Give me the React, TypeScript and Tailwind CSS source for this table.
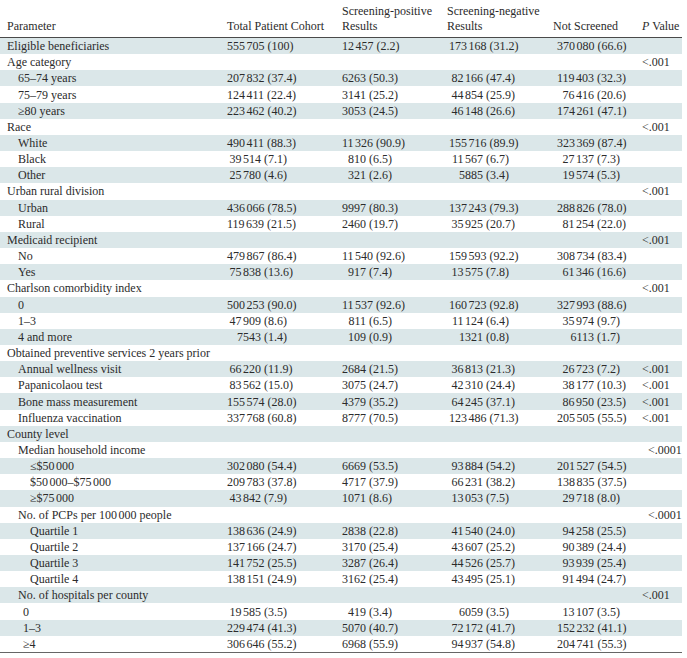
import type { ReactNode } from 'react';

type Row = {
  label: ReactNode;
  indent: 0 | 1 | 2 | 3;
  cells?: [string, string, string, string];
  p?: string;
};

// narrow gap used as the thousands separator
const G = () => <span className="ml-[1.5px]" />;

function Num({ n }: { n: string }) {
  if (n.length <= 4) return <>{n}</>;
  return (
    <>
      {n.slice(0, n.length - 3)}
      <G />
      {n.slice(-3)}
    </>
  );
}

const rows: Row[] = [
  { label: 'Eligible beneficiaries', indent: 0, cells: ['555705 (100)', '12457 (2.2)', '173168 (31.2)', '370080 (66.6)'] },
  { label: 'Age category', indent: 0, p: '<.001' },
  { label: '65–74 years', indent: 1, cells: ['207832 (37.4)', '6263 (50.3)', '82166 (47.4)', '119403 (32.3)'] },
  { label: '75–79 years', indent: 1, cells: ['124411 (22.4)', '3141 (25.2)', '44854 (25.9)', '76416 (20.6)'] },
  { label: '≥80 years', indent: 1, cells: ['223462 (40.2)', '3053 (24.5)', '46148 (26.6)', '174261 (47.1)'] },
  { label: 'Race', indent: 0, p: '<.001' },
  { label: 'White', indent: 1, cells: ['490411 (88.3)', '11326 (90.9)', '155716 (89.9)', '323369 (87.4)'] },
  { label: 'Black', indent: 1, cells: ['39514 (7.1)', '810 (6.5)', '11567 (6.7)', '27137 (7.3)'] },
  { label: 'Other', indent: 1, cells: ['25780 (4.6)', '321 (2.6)', '5885 (3.4)', '19574 (5.3)'] },
  { label: 'Urban rural division', indent: 0, p: '<.001' },
  { label: 'Urban', indent: 1, cells: ['436066 (78.5)', '9997 (80.3)', '137243 (79.3)', '288826 (78.0)'] },
  { label: 'Rural', indent: 1, cells: ['119639 (21.5)', '2460 (19.7)', '35925 (20.7)', '81254 (22.0)'] },
  { label: 'Medicaid recipient', indent: 0, p: '<.001' },
  { label: 'No', indent: 1, cells: ['479867 (86.4)', '11540 (92.6)', '159593 (92.2)', '308734 (83.4)'] },
  { label: 'Yes', indent: 1, cells: ['75838 (13.6)', '917 (7.4)', '13575 (7.8)', '61346 (16.6)'] },
  { label: 'Charlson comorbidity index', indent: 0, p: '<.001' },
  { label: '0', indent: 1, cells: ['500253 (90.0)', '11537 (92.6)', '160723 (92.8)', '327993 (88.6)'] },
  { label: '1–3', indent: 1, cells: ['47909 (8.6)', '811 (6.5)', '11124 (6.4)', '35974 (9.7)'] },
  { label: '4 and more', indent: 1, cells: ['7543 (1.4)', '109 (0.9)', '1321 (0.8)', '6113 (1.7)'] },
  { label: 'Obtained preventive services 2 years prior', indent: 0 },
  { label: 'Annual wellness visit', indent: 1, cells: ['66220 (11.9)', '2684 (21.5)', '36813 (21.3)', '26723 (7.2)'], p: '<.001' },
  { label: 'Papanicolaou test', indent: 1, cells: ['83562 (15.0)', '3075 (24.7)', '42310 (24.4)', '38177 (10.3)'], p: '<.001' },
  { label: 'Bone mass measurement', indent: 1, cells: ['155574 (28.0)', '4379 (35.2)', '64245 (37.1)', '86950 (23.5)'], p: '<.001' },
  { label: 'Influenza vaccination', indent: 1, cells: ['337768 (60.8)', '8777 (70.5)', '123486 (71.3)', '205505 (55.5)'], p: '<.001' },
  { label: 'County level', indent: 0 },
  { label: 'Median household income', indent: 1, p: '<.0001' },
  { label: <>≤$50<G />000</>, indent: 2, cells: ['302080 (54.4)', '6669 (53.5)', '93884 (54.2)', '201527 (54.5)'] },
  { label: <>$50<G />000–$75<G />000</>, indent: 2, cells: ['209783 (37.8)', '4717 (37.9)', '66231 (38.2)', '138835 (37.5)'] },
  { label: <>≥$75<G />000</>, indent: 2, cells: ['43842 (7.9)', '1071 (8.6)', '13053 (7.5)', '29718 (8.0)'] },
  { label: <>No. of PCPs per 100<G />000 people</>, indent: 1, p: '<.0001' },
  { label: 'Quartile 1', indent: 2, cells: ['138636 (24.9)', '2838 (22.8)', '41540 (24.0)', '94258 (25.5)'] },
  { label: 'Quartile 2', indent: 2, cells: ['137166 (24.7)', '3170 (25.4)', '43607 (25.2)', '90389 (24.4)'] },
  { label: 'Quartile 3', indent: 2, cells: ['141752 (25.5)', '3287 (26.4)', '44526 (25.7)', '93939 (25.4)'] },
  { label: 'Quartile 4', indent: 2, cells: ['138151 (24.9)', '3162 (25.4)', '43495 (25.1)', '91494 (24.7)'] },
  { label: 'No. of hospitals per county', indent: 1, p: '<.001' },
  { label: '0', indent: 3, cells: ['19585 (3.5)', '419 (3.4)', '6059 (3.5)', '13107 (3.5)'] },
  { label: '1–3', indent: 3, cells: ['229474 (41.3)', '5070 (40.7)', '72172 (41.7)', '152232 (41.1)'] },
  { label: '≥4', indent: 3, cells: ['306646 (55.2)', '6968 (55.9)', '94937 (54.8)', '204741 (55.3)'] },
];

const indentCls = ['pl-[7px]', 'pl-[18px]', 'pl-[30px]', 'pl-[23px]'];

// per data column: left offset and minimum width of the number part
const cols = [
  { cell: 'pl-0', num: 'min-w-[34px]' },
  { cell: 'pl-0', num: 'min-w-[24px]' },
  { cell: 'pl-[2px]', num: 'min-w-[34px]' },
  { cell: 'pl-[4px]', num: 'min-w-[37px]' },
];

const grid = 'grid grid-cols-[227px_115px_105px_106px_89px_40px]';

function Value({ v, col }: { v: string; col: number }) {
  const [n, rest] = v.split(' (');
  return (
    <div className={`${cols[col].cell} whitespace-nowrap`}>
      <span className={`inline-block text-right ${cols[col].num}`}>
        <Num n={n} />
      </span>{' '}
      ({rest}
    </div>
  );
}

export default function App() {
  return (
    <div
      className="w-[687px] min-h-[658px] bg-white text-[12px] text-[#2b2b2b]"
      style={{ fontFamily: '"Liberation Serif", "DejaVu Serif", serif' }}
    >
      <div className="w-[682px]">
        {/* Header */}
        <div className={`${grid} h-[38px] items-end pb-[3px] leading-[15px] border-b border-[#4a4a4a]`}>
          <div className="pl-[7px]">Parameter</div>
          <div>Total Patient Cohort</div>
          <div>
            Screening-positive
            <br />
            Results
          </div>
          <div>
            Screening-negative
            <br />
            Results
          </div>
          <div>Not Screened</div>
          <div className="whitespace-nowrap">
            <i>P</i> Value
          </div>
        </div>

        {/* Body */}
        <div className="border-b border-[#666666]">
          {rows.map((r, i) => (
            <div
              key={i}
              className={`${grid} h-[16.16px] items-center leading-[16px] ${i % 2 === 0 ? 'bg-[#dbe7e9]' : ''}`}
            >
              <div className={`${indentCls[r.indent]} whitespace-nowrap`}>{r.label}</div>
              {r.cells ? r.cells.map((c, j) => <Value key={j} v={c} col={j} />) : [0, 1, 2, 3].map((j) => <div key={j} />)}
              <div className={r.p === '<.0001' ? 'pl-[6px] whitespace-nowrap' : 'whitespace-nowrap'}>{r.p}</div>
            </div>
          ))}
        </div>
      </div>
    </div>
  );
}
